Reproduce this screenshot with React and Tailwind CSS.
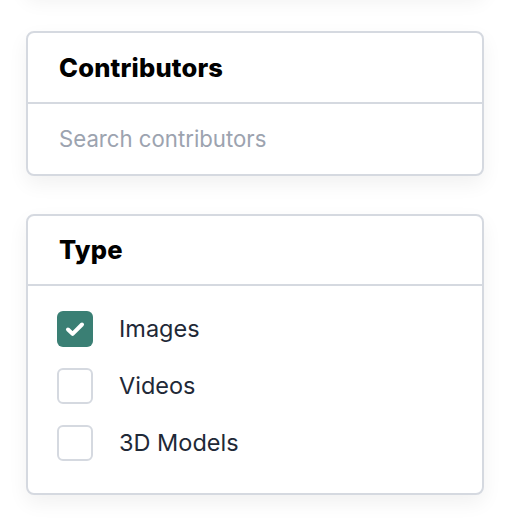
import React, { useState } from "react";

const types = ["Images", "Videos", "3D Models"];

function Check() {
  return (
    <svg width="22" height="22" viewBox="0 0 22 22" fill="none">
      <path
        d="M4 11.5l4.6 4.4L18 6.5"
        stroke="white"
        strokeWidth="4"
        strokeLinecap="round"
        strokeLinejoin="round"
      />
    </svg>
  );
}

export default function App() {
  const [checked, setChecked] = useState({ Images: true });

  return (
    <div
      className="min-h-[532px] bg-white pl-[26px] pr-[24px] flex flex-col gap-[38px] overflow-hidden"
      style={{ fontFamily: "Inter, 'Noto Sans', sans-serif" }}
    >
      {/* previous card, only its shadow shows */}
      <div className="-mt-[47px] h-[40px] bg-white rounded-[7px] shadow-[0_8px_20px_rgba(0,0,0,0.06)]" />

      {/* Contributors */}
      <div className="bg-white border-2 border-[#d5d9e0] rounded-[8px] shadow-[0_8px_20px_rgba(0,0,0,0.06)]">
        <div className="h-[71px] px-[31px] flex items-center border-b-2 border-[#d5d9e0]">
          <h3 className="text-[25.5px] font-extrabold text-black leading-none tracking-[0.2px]">
            Contributors
          </h3>
        </div>
        <input
          type="text"
          placeholder="Search contributors"
          className="w-full h-[70px] pb-[2px] px-[31px] text-[22.2px] text-[#1f2937] placeholder:text-[#9ca3af] outline-none bg-transparent rounded-b-[8px]"
        />
      </div>

      {/* Type */}
      <div className="bg-white border-2 border-[#d5d9e0] rounded-[8px] shadow-[0_8px_20px_rgba(0,0,0,0.06)]">
        <div className="h-[70px] px-[31px] flex items-center border-b-2 border-[#d5d9e0]">
          <h3 className="text-[25.5px] font-extrabold text-black leading-none tracking-[0.2px]">
            Type
          </h3>
        </div>
        <div className="px-[29px] pt-[25px] pb-[32px] flex flex-col gap-[21px]">
          {types.map((t) => {
            const on = !!checked[t];
            return (
              <label key={t} className="flex items-center gap-[26px] h-[36px] cursor-pointer">
                <button
                  type="button"
                  onClick={() => setChecked({ ...checked, [t]: !on })}
                  className={
                    on
                      ? "w-[36px] h-[36px] rounded-[6px] bg-[#3a7f74] flex items-center justify-center"
                      : "w-[36px] h-[36px] rounded-[6px] border-2 border-[#d5d9e0] bg-white"
                  }
                >
                  {on && <Check />}
                </button>
                <span className="text-[23.5px] leading-none text-[#1f2937]">{t}</span>
              </label>
            );
          })}
        </div>
      </div>
    </div>
  );
}
